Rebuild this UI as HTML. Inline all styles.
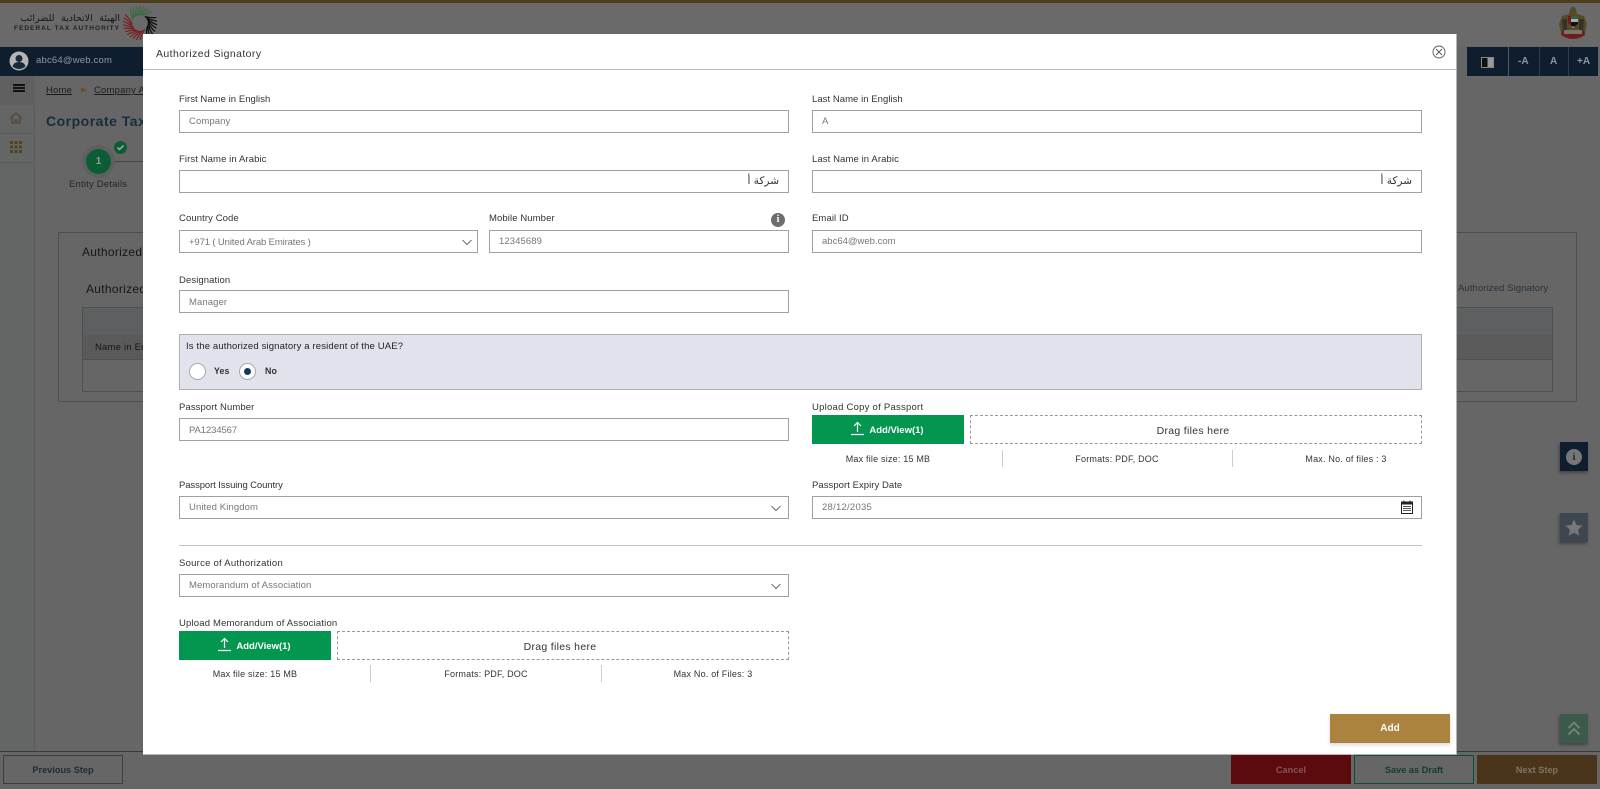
<!DOCTYPE html>
<html lang="en"><head><meta charset="utf-8"><title>Authorized Signatory</title>
<style>
*{box-sizing:border-box}
html,body{margin:0;padding:0;width:1600px;height:789px;overflow:hidden;background:#666;font-family:"Liberation Sans","DejaVu Sans",sans-serif}
.a{position:absolute}
.t{position:absolute;white-space:nowrap;line-height:12px;height:12px}
.l{font-size:9.5px;color:#333;letter-spacing:.1px}
.i{position:absolute;height:23px;background:#fff;border:1px solid #a0a0a0;font-size:9.5px;color:#777;line-height:21px;padding-left:9px;letter-spacing:.1px;white-space:nowrap}
.ar{text-align:right;padding:0 9px 0 0;color:#333;font-size:10.5px;font-family:"DejaVu Sans",sans-serif;letter-spacing:0}
.m{font-size:9px;color:#333;text-align:center;transform:translateX(-50%);letter-spacing:.2px}
.s{position:absolute;width:1px;height:17px;background:#c3d0dc}
.up{position:absolute;height:29px;width:152px;background:#03964f;color:#fff;font-size:9.5px;font-weight:bold;line-height:31px;text-align:center;padding-left:17px}
.dr{position:absolute;height:29px;border:1px dashed #999;color:#333;font-size:10.5px;line-height:31px;text-align:center;letter-spacing:.3px;padding-right:6px}
.fb{position:absolute;top:755px;height:29px;width:120px;font-size:9.2px;font-weight:bold;line-height:31px;text-align:center}
</style></head><body>
<div class="a" style="left:0;top:0;width:1600px;height:3px;background:#4f3c1c"></div>
<div class="a" style="left:0;top:3px;width:1600px;height:43px;background:#6a6a6a"></div>
<div dir="rtl" class="t" style="left:14px;top:13px;width:106px;font-size:9.5px;word-spacing:3.5px;color:#181818;font-family:'DejaVu Sans',sans-serif;text-align:right">الهيئة الاتحادية للضرائب</div>
<div class="t" style="left:14px;top:23px;font-size:6.5px;letter-spacing:1.03px;color:#222;font-weight:bold">FEDERAL TAX AUTHORITY</div>
<svg class="a" style="left:122px;top:5px" width="36" height="36" viewBox="-18 -18 36 36" fill="none" stroke-width="1.2">
<g stroke="#3b6a42"><path d="M0-8Q7-11 10-14" transform="rotate(-72)"/><path d="M0-8Q7-11 10-14" transform="rotate(-60)"/><path d="M0-8Q7-11 10-14" transform="rotate(-48)"/><path d="M0-8Q7-11 10-14" transform="rotate(-36)"/><path d="M0-8Q7-11 10-14" transform="rotate(-24)"/><path d="M0-8Q7-11 10-14" transform="rotate(-12)"/><path d="M0-8Q7-11 10-14"/><path d="M0-8Q7-11 10-14" transform="rotate(12)"/></g>
<g stroke="#0b0b0b"><path d="M0-8Q7-11 10-14" transform="rotate(36)"/><path d="M0-8Q7-11 10-14" transform="rotate(48)"/><path d="M0-8Q7-11 10-14" transform="rotate(60)"/><path d="M0-8Q7-11 10-14" transform="rotate(72)"/><path d="M0-8Q7-11 10-14" transform="rotate(84)"/><path d="M0-8Q7-11 10-14" transform="rotate(96)"/><path d="M0-8Q7-11 10-14" transform="rotate(108)"/><path d="M0-8Q7-11 10-14" transform="rotate(120)"/></g>
<g stroke="#7a1e20"><path d="M0-8Q7-11 10-14" transform="rotate(144)"/><path d="M0-8Q7-11 10-14" transform="rotate(156)"/><path d="M0-8Q7-11 10-14" transform="rotate(168)"/><path d="M0-8Q7-11 10-14" transform="rotate(180)"/><path d="M0-8Q7-11 10-14" transform="rotate(192)"/><path d="M0-8Q7-11 10-14" transform="rotate(204)"/><path d="M0-8Q7-11 10-14" transform="rotate(216)"/><path d="M0-8Q7-11 10-14" transform="rotate(228)"/><path d="M0-8Q7-11 10-14" transform="rotate(240)"/><path d="M0-8Q7-11 10-14" transform="rotate(252)"/><path d="M0-8Q7-11 10-14" transform="rotate(264)"/></g>
</svg>
<svg class="a" style="left:1558px;top:5px" width="30" height="36" viewBox="0 0 30 36">
<path d="M15 1l3 3 1 5 7 2 3 8-2 9H3L1 19l3-8 7-2 1-5z" fill="#574a26"/>
<path d="M4 14l5 0 0 14H5zM26 14h-5v14h4z" fill="#35322a"/>
<path d="M10 11h10v8l-5 4-5-4z" fill="#aaa"/><path d="M10 11h3v10l-3-2z" fill="#6e1c1c"/><path d="M13 11h7v3h-7z" fill="#37623e"/><path d="M13 17h7v2l-3 2.500h-4z" fill="#111"/>
<path d="M3 30q12 8 24 0l-1-4q-11 5-22 0z" fill="#6e1c1c"/><path d="M6 25h18v4H6z" fill="#77776c"/>
</svg>
<div class="a" style="left:0;top:47px;width:143px;height:29px;background:#0f1e2e"></div>
<svg class="a" style="left:9px;top:51px" width="20" height="20" viewBox="0 0 20 20"><circle cx="10" cy="10" r="9.500" fill="#b5b5b5"/><circle cx="10" cy="7.500" r="3.500" fill="#1b2a3a"/><path d="M3.500 15.500q1-4.500 6.500-4.500t6.500 4.500q-3 2.500-6.500 2.500t-6.500-2.500z" fill="#1b2a3a"/></svg>
<div class="t" style="left:36px;top:55px;font-size:9.5px;color:#8c99a6;letter-spacing:.2px">abc64@web.com</div>
<div class="a" style="left:0;top:76px;width:1600px;height:29px;background:#666"></div>
<div class="a" style="left:0;top:76px;width:35px;height:29px;background:#606060"></div>
<div class="a" style="left:13px;top:84px;width:12px;height:8px;border-top:2px solid #111;border-bottom:2px solid #111"></div><div class="a" style="left:13px;top:87px;width:12px;height:2px;background:#111"></div>
<div class="t" style="left:46px;top:85px;font-size:9.5px;color:#1c1c1c;text-decoration:underline;letter-spacing:.2px">Home</div>
<div class="a" style="left:81px;top:87px;border-left:6px solid #6a5226;border-top:3.500px solid transparent;border-bottom:3.500px solid transparent"></div>
<div class="t" style="left:94px;top:85px;font-size:9.500px;color:#1c1c1c;text-decoration:underline;letter-spacing:.2px">Company A</div>
<div class="a" style="left:0;top:105px;width:35px;height:646px;background:#646565;border-right:1px solid #5a5a5a"></div>
<div class="a" style="left:0;top:133px;width:35px;height:1px;background:#5a5a5a"></div>
<div class="a" style="left:0;top:162px;width:35px;height:1px;background:#5a5a5a"></div>
<svg class="a" style="left:10px;top:112px" width="12" height="12" viewBox="0 0 12 12" fill="none" stroke="#55472a" stroke-width="1.200"><path d="M.5 6L6 1l5.500 5M2 5v6h3V8h2v3h3V5"/></svg>
<svg class="a" style="left:10px;top:141px" width="12" height="12" viewBox="0 0 12 12" fill="#55431f"><path d="M0 0h3v3H0zM4.500 0h3v3h-3zM9 0h3v3H9zM0 4.500h3v3H0zM4.500 4.500h3v3h-3zM9 4.500h3v3H9zM0 9h3v3H0zM4.500 9h3v3h-3zM9 9h3v3H9z"/></svg>
<div class="t" style="left:46px;top:113px;height:16px;line-height:16px;font-size:14px;font-weight:bold;color:#1a2b40;letter-spacing:.5px">Corporate Tax</div>
<div class="a" style="left:114px;top:161px;width:30px;height:1px;background:#444"></div>
<div class="a" style="left:82px;top:145px;width:33px;height:33px;border-radius:50%;background:#5d6060"></div>
<div class="a" style="left:86px;top:149px;width:25px;height:25px;border-radius:50%;background:#0c5c36;color:#999;font-size:10px;font-weight:bold;text-align:center;line-height:25px">1</div>
<div class="a" style="left:114px;top:141px;width:13px;height:13px;border-radius:50%;background:#0c5c36"></div>
<svg class="a" style="left:114px;top:141px" width="13" height="13" viewBox="0 0 13 13" fill="none" stroke="#aaa" stroke-width="1.500"><path d="M3.500 6.500l2 2 4-4"/></svg>
<div class="t" style="left:69px;top:179px;font-size:9.500px;color:#262626;letter-spacing:.2px">Entity Details</div>
<div class="a" style="left:58px;top:232px;width:1519px;height:170px;border:1px solid #4f4f4f"></div>
<div class="t" style="left:82px;top:245px;height:14px;line-height:14px;font-size:12px;color:#161616;letter-spacing:.3px">Authorized</div>
<div class="t" style="left:86px;top:282px;height:14px;line-height:14px;font-size:12px;color:#161616;letter-spacing:.3px">Authorized</div>
<div class="t" style="left:1458px;top:283px;font-size:9.500px;color:#27333f;letter-spacing:.1px">Authorized Signatory</div>
<div class="a" style="left:82px;top:307px;width:1471px;height:85px;border:1px solid #505050"></div>
<div class="a" style="left:83px;top:308px;width:1469px;height:27px;background:#5d6060"></div>
<div class="a" style="left:83px;top:335px;width:1469px;height:25px;background:#5a5a5a;border-bottom:1px solid #505050"></div>
<div class="t" style="left:95px;top:342px;font-size:9.500px;color:#161616;letter-spacing:.2px">Name in En</div>
<div class="a" style="left:1467px;top:47px;width:131px;height:29px;background:#0f1e2e"></div>
<div class="a" style="left:1508px;top:47px;width:1px;height:29px;background:#5a5a5a"></div>
<div class="a" style="left:1539px;top:47px;width:1px;height:29px;background:#2e3c4a"></div>
<div class="a" style="left:1568px;top:47px;width:1px;height:29px;background:#2e3c4a"></div>
<div class="a" style="left:1481px;top:57px;width:13px;height:11px;border:1px solid #888;background:linear-gradient(90deg,#111 50%,#999 50%)"></div>
<div class="t" style="left:1518px;top:56px;font-size:10px;font-weight:bold;color:#8b96a2">-A</div>
<div class="t" style="left:1550px;top:56px;font-size:10px;font-weight:bold;color:#8b96a2">A</div>
<div class="t" style="left:1577px;top:56px;font-size:10px;font-weight:bold;color:#8b96a2">+A</div>
<div class="a" style="left:1560px;top:442px;width:28px;height:29px;background:#0f1e2e;box-shadow:-1px 2px 3px #444"></div>
<div class="a" style="left:1566px;top:449px;width:16px;height:16px;border-radius:50%;background:#777;color:#14304a;font:bold 11px/16px 'Liberation Serif',serif;text-align:center">i</div>
<div class="a" style="left:1560px;top:513px;width:28px;height:29px;background:#3e4650;box-shadow:-1px 2px 3px #444"></div>
<svg class="a" style="left:1565px;top:519px" width="18" height="17" viewBox="0 0 18 17"><path d="M9 .5l2.500 5.500 6 .7-4.500 4 1.300 6L9 13.700 3.700 16.700l1.300-6-4.500-4 6-.7z" fill="#777"/></svg>
<div class="a" style="left:1560px;top:714px;width:28px;height:29px;background:#3c5a49;box-shadow:-1px 2px 3px #444"></div>
<svg class="a" style="left:1567px;top:721px" width="14" height="15" viewBox="0 0 14 15" fill="none" stroke="#6f8277" stroke-width="2"><path d="M1.500 7L7 1.500 12.500 7M1.500 13.500L7 8l5.500 5.500"/></svg>
<div class="a" style="left:0;top:751px;width:1600px;height:1px;background:#3a3a3a"></div>
<div class="fb" style="left:3px;top:755px;height:29px;width:120px;border:1px solid #3f3f3f;color:#202b38;line-height:29px">Previous Step</div>
<div class="fb" style="left:1231px;background:#5b0a0e;color:#8a5356">Cancel</div>
<div class="fb" style="left:1354px;border:1px solid #0d4d33;color:#123d2c;line-height:29px">Save as Draft</div>
<div class="fb" style="left:1477px;background:#4a351b;color:#7d7465">Next Step</div>

<div class="a" style="left:143px;top:34px;width:1314px;height:721px;background:#fff;border-right:1px solid #b5b5b5;border-bottom:1px solid #b5b5b5"></div>
<div class="t" style="left:156px;top:48px;font-size:10.500px;color:#333;letter-spacing:.4px">Authorized Signatory</div>
<div class="a" style="left:143px;top:69px;width:1314px;height:1px;background:#b8b8b8"></div>
<svg class="a" style="left:1432px;top:45px" width="14" height="14" viewBox="0 0 14 14" fill="none" stroke="#555" stroke-width=".9"><circle cx="7" cy="7" r="6"/><path d="M4 4l6 6M10 4l-6 6"/></svg>

<div class="t l" style="left:179px;top:94px;letter-spacing:.05px">First Name in English</div>
<div class="i" style="left:179px;top:110px;width:610px">Company</div>
<div class="t l" style="left:812px;top:94px;letter-spacing:.05px">Last Name in English</div>
<div class="i" style="left:812px;top:110px;width:610px">A</div>
<div class="t l" style="left:179px;top:154px">First Name in Arabic</div>
<div class="i ar" style="left:179px;top:170px;width:610px" dir="rtl">شركة أ</div>
<div class="t l" style="left:812px;top:154px">Last Name in Arabic</div>
<div class="i ar" style="left:812px;top:170px;width:610px" dir="rtl">شركة أ</div>
<div class="t l" style="left:179px;top:213px">Country Code</div>
<div class="i" style="left:179px;top:230px;width:299px;line-height:23px;letter-spacing:-.13px">+971 ( United Arab Emirates )</div>
<svg class="a" style="left:462px;top:239px" width="10" height="7" viewBox="0 0 10 7" fill="none" stroke="#444" stroke-width=".8"><path d="M.5 1L5 5.500 9.500 1"/></svg>
<div class="t l" style="left:489px;top:213px">Mobile Number</div>
<div class="a" style="left:771px;top:213px;width:14px;height:14px;border-radius:50%;background:#6e6e6e;color:#fff;font:bold 10px/14px 'Liberation Serif',serif;text-align:center">i</div>
<div class="i" style="left:489px;top:230px;width:300px">12345689</div>
<div class="t l" style="left:812px;top:213px">Email ID</div>
<div class="i" style="left:812px;top:230px;width:610px;letter-spacing:0">abc64@web.com</div>
<div class="t l" style="left:179px;top:275px">Designation</div>
<div class="i" style="left:179px;top:290px;width:610px;line-height:23px">Manager</div>
<div class="a" style="left:179px;top:334px;width:1243px;height:56px;background:#e0e3eb;border:1px solid #b0b0b0"></div>
<div class="t l" style="left:186px;top:341px;color:#222;letter-spacing:.15px">Is the authorized signatory a resident of the UAE?</div>
<div class="a" style="left:189px;top:363px;width:17px;height:17px;border-radius:50%;background:#fff;border:1px solid #aaa"></div>
<div class="t l" style="left:214px;top:365px;color:#333;font-weight:bold;font-size:8.800px">Yes</div>
<div class="a" style="left:239px;top:363px;width:17px;height:17px;border-radius:50%;background:#fff;border:1px solid #aaa"></div>
<div class="a" style="left:244px;top:368px;width:7px;height:7px;border-radius:50%;background:#17375e"></div>
<div class="t l" style="left:265px;top:365px;color:#333;font-weight:bold;font-size:8.800px">No</div>

<div class="t l" style="left:179px;top:402px">Passport Number</div>
<div class="i" style="left:179px;top:418px;width:610px;line-height:23px;letter-spacing:-.1px">PA1234567</div>
<div class="t l" style="left:812px;top:402px;letter-spacing:.25px">Upload Copy of Passport</div>
<div class="up" style="left:812px;top:415px">Add/View(1)</div>
<svg class="a" style="left:851px;top:421px" width="13" height="15" viewBox="0 0 13 15" fill="none" stroke="#fff" stroke-width="1.200"><path d="M6.500 11V1.500M3 5l3.500-3.500L10 5M0 13.500h13"/></svg>
<div class="dr" style="left:970px;top:415px;width:452px">Drag files here</div>
<div class="t m" style="left:888px;top:453px">Max file size: 15 MB</div>
<div class="s" style="left:1002px;top:450px"></div>
<div class="t m" style="left:1117px;top:453px">Formats: PDF, DOC</div>
<div class="s" style="left:1232px;top:450px"></div>
<div class="t m" style="left:1346px;top:453px">Max. No. of files : 3</div>
<div class="t l" style="left:179px;top:480px;letter-spacing:-.1px">Passport Issuing Country</div>
<div class="i" style="left:179px;top:496px;width:610px">United Kingdom</div>
<svg class="a" style="left:771px;top:505px" width="10" height="7" viewBox="0 0 10 7" fill="none" stroke="#444" stroke-width=".8"><path d="M.5 1L5 5.500 9.500 1"/></svg>
<div class="t l" style="left:812px;top:480px;letter-spacing:.05px">Passport Expiry Date</div>
<div class="i" style="left:812px;top:496px;width:610px;letter-spacing:.25px">28/12/2035</div>
<svg class="a" style="left:1401px;top:500px" width="12" height="14" viewBox="0 0 12 14"><path d="M.5 2h11v11.500H.5z" fill="#fff" stroke="#222"/><path d="M1 2h10v2.500H1z" fill="#222"/><path d="M3 .5v2M9 .5v2" stroke="#222"/><path d="M2 6h8v1H2zM2 8h8v1H2zM2 10h8v1H2z" fill="#555"/></svg>
<div class="a" style="left:179px;top:545px;width:1243px;height:1px;background:#c4c4c4"></div>
<div class="t l" style="left:179px;top:558px;letter-spacing:.25px">Source of Authorization</div>
<div class="i" style="left:179px;top:574px;width:610px">Memorandum of Association</div>
<svg class="a" style="left:771px;top:583px" width="10" height="7" viewBox="0 0 10 7" fill="none" stroke="#444" stroke-width=".8"><path d="M.5 1L5 5.500 9.500 1"/></svg>
<div class="t l" style="left:179px;top:618px;letter-spacing:.18px">Upload Memorandum of Association</div>
<div class="up" style="left:179px;top:631px">Add/View(1)</div>
<svg class="a" style="left:218px;top:637px" width="13" height="15" viewBox="0 0 13 15" fill="none" stroke="#fff" stroke-width="1.200"><path d="M6.500 11V1.500M3 5l3.500-3.500L10 5M0 13.500h13"/></svg>
<div class="dr" style="left:337px;top:631px;width:452px">Drag files here</div>
<div class="t m" style="left:255px;top:668px">Max file size: 15 MB</div>
<div class="s" style="left:370px;top:665px"></div>
<div class="t m" style="left:486px;top:668px">Formats: PDF, DOC</div>
<div class="s" style="left:601px;top:665px"></div>
<div class="t m" style="left:713px;top:668px">Max No. of Files: 3</div>
<div class="a" style="left:1330px;top:714px;width:120px;height:29px;background:#ab833f;color:#fff;font-size:10px;font-weight:bold;line-height:29px;text-align:center;box-shadow:0 2px 4px rgba(0,0,0,.15)">Add</div>
</body></html>
